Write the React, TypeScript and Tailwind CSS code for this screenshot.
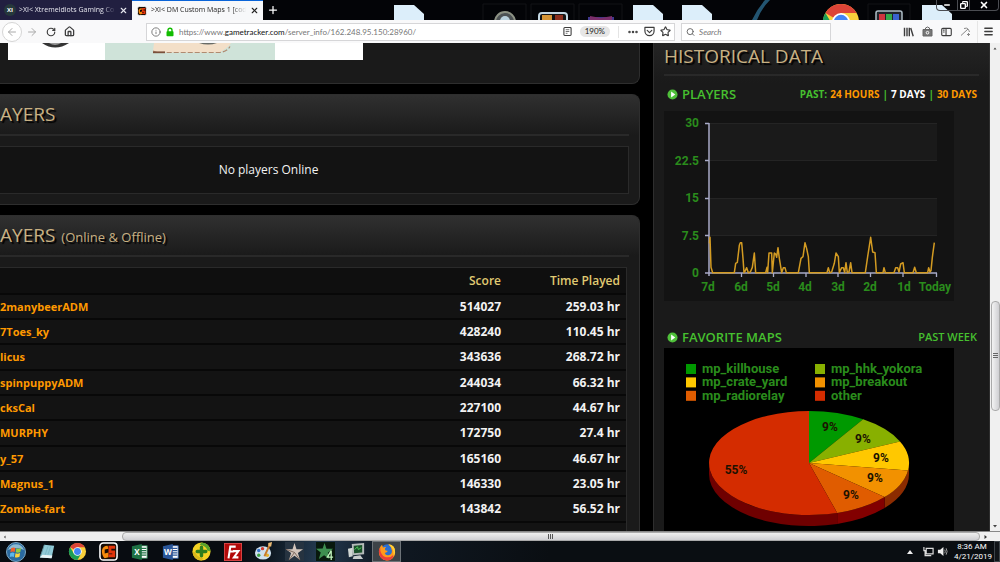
import type { ReactNode } from "react";
import {
  ArrowLeft,
  ArrowRight,
  RotateCw,
  House,
  Info,
  X,
  Plus,
  Search,
  Star,
  Menu,
  Ellipsis,
  Copy,
  Minus,
} from "lucide-react";

const players: [string, string, string][] = [
  ["2manybeerADM", "514027", "259.03 hr"],
  ["7Toes_ky", "428240", "110.45 hr"],
  ["licus", "343636", "268.72 hr"],
  ["spinpuppyADM", "244034", "66.32 hr"],
  ["cksCal", "227100", "44.67 hr"],
  ["MURPHY", "172750", "27.4 hr"],
  ["y_57", "165160", "46.67 hr"],
  ["Magnus_1", "146330", "23.05 hr"],
  ["Zombie-fart", "143842", "56.52 hr"],
];

const slices = [
  { name: "mp_killhouse", share: 1, color: "#009900", label: "9%", lx: 166, ly: 82 },
  { name: "mp_hhk_yokora", share: 1, color: "#88b000", label: "9%", lx: 199, ly: 94 },
  { name: "mp_crate_yard", share: 1, color: "#ffc800", label: "9%", lx: 217, ly: 113 },
  { name: "mp_breakout", share: 1, color: "#f29100", label: "9%", lx: 211, ly: 133 },
  { name: "mp_radiorelay", share: 1, color: "#e05c00", label: "9%", lx: 187, ly: 150 },
  { name: "other", share: 6, color: "#d42c00", label: "55%", lx: 72, ly: 125 },
];

const CX = 145;
const CY = 115;
const RX = 100;
const RY = 52;
const DEPTH = 11;

const at = (deg: number, drop = 0) => {
  const a = (deg * Math.PI) / 180;
  return `${(CX + RX * Math.sin(a)).toFixed(1)} ${(CY - RY * Math.cos(a) + drop).toFixed(1)}`;
};
const wedge = (from: number, to: number) =>
  `M${CX} ${CY}L${at(from)}A${RX} ${RY} 0 ${to - from > 180 ? 1 : 0} 1 ${at(to)}Z`;
const side = (from: number, to: number) =>
  `M${at(from)}A${RX} ${RY} 0 0 1 ${at(to)}L${at(to, DEPTH)}A${RX} ${RY} 0 0 0 ${at(from, DEPTH)}Z`;

function PieChart() {
  let start = 0;
  return (
    <svg viewBox="0 0 290 190" className="block h-[190px] w-[290px] shrink-0 bg-black" role="img" aria-label="Favorite maps">
      <g fontFamily="Roboto, sans-serif" fontWeight="700" fontSize="13">
        {slices.map((s, i) => {
          const x = i % 2 ? 151 : 22;
          const y = 16 + Math.floor(i / 2) * 13.4;
          return (
            <g key={s.name}>
              <rect x={x} y={y} width="10" height="10" fill={s.color} />
              <text x={x + 16} y={y + 9} fill="#2a8c1c">{s.name}</text>
            </g>
          );
        })}
      </g>
      <path d={side(90, 130.9)} fill="#8c2c00" />
      <path d={side(130.9, 163.6)} fill="#820000" />
      <path d={side(163.6, 270)} fill="#6f0000" />
      {slices.map((s) => {
        const from = start;
        start += (s.share * 360) / 11;
        return <path key={s.name} d={wedge(from, start)} fill={s.color} />;
      })}
      <g fontFamily="Roboto, sans-serif" fontWeight="700" fontSize="12" fill="#1c1200" textAnchor="middle">
        {slices.map((s) => (
          <text key={s.name} x={s.lx} y={s.ly + 1}>{s.label}</text>
        ))}
      </g>
    </svg>
  );
}

const yLabels: [string, number][] = [["30", 12], ["22.5", 50], ["15", 87], ["7.5", 125], ["0", 162]];
const xLabels: [string, number][] = [
  ["7d", 44], ["6d", 77], ["5d", 109], ["4d", 141], ["3d", 174], ["2d", 206], ["1d", 240], ["Today", 271],
];

function PlayersChart() {
  return (
    <svg viewBox="0 0 290 190" className="block h-[190px] w-[290px] shrink-0 bg-[#131313]" role="img" aria-label="Players">
      <rect x="46" y="12" width="227" height="37" fill="#1a1a1a" />
      <rect x="46" y="87" width="227" height="37" fill="#1a1a1a" />
      <path d="M46 12.500H273M46 49.500H273M46 87.500H273M46 124.500H273" stroke="#242424" />
      <path d="M45 12V165M41 12.500H45M41 49.500H45M41 87.500H45M41 124.500H45M41 162H273" stroke="#a9abc8" strokeWidth="1.500" fill="none" />
      <path d="M77.500 162v4M109.500 162v4M142 162v4M174 162v4M206.500 162v4M239 162v4M272.500 162v4" stroke="#a9abc8" strokeWidth="1.300" />
      <polyline
        transform="translate(-9 69) scale(.33333)"
        fill="none"
        stroke="#d39b22"
        strokeWidth="4.500"
        strokeLinejoin="round"
        points="163,190 165,172 168,262 173,278 238,278 242,250 247,247 253,196 256,188 260,188 264,235 267,278 270,274 275,263 280,278 286,276 292,262 298,219 302,278 332,278 336,262 338,278 342,219 350,219 352,278 358,219 362,222 365,232 369,203 373,235 380,278 385,263 390,263 394,278 430,278 438,235 444,230 450,188 455,206 460,230 463,278 516,278 520,263 524,278 530,276 538,250 543,219 550,230 553,278 560,263 565,263 569,278 573,248 577,278 582,276 587,248 591,278 631,278 638,230 647,172 653,216 660,218 664,278 684,278 687,263 691,278 717,278 722,263 728,263 732,276 737,252 744,248 748,278 774,278 779,262 784,278 818,278 821,263 825,276 828,272 832,232 838,188"
      />
      <g fontFamily="Roboto, sans-serif" fontWeight="700" fontSize="12" fill="#2a8c1c">
        {yLabels.map(([t, y]) => (
          <text key={t} x="35" y={y + 4} textAnchor="end">{t}</text>
        ))}
        {xLabels.map(([t, x]) => (
          <text key={t} x={x} y="180" textAnchor="middle">{t}</text>
        ))}
      </g>
    </svg>
  );
}

function PanelHeading({ children }: { children: ReactNode }) {
  return (
    <h2 className="flex h-[41px] shrink-0 items-center gap-1.5 border-b-2 border-[#292929] whitespace-nowrap text-[19px] text-[#c8b183] [text-shadow:2px_2px_1px_#000]">
      {children}
    </h2>
  );
}

function SectionTitle({ title, children }: { title: string; children: ReactNode }) {
  return (
    <div className="flex items-center justify-between whitespace-nowrap pl-[3px] pr-[2px] text-[#46c02f]">
      <h3 className="flex items-center gap-1 text-[13px] leading-4 font-semibold">
        <svg viewBox="0 0 12 12" className="size-[11px]" aria-hidden="true">
          <circle cx="6" cy="6" r="5.500" fill="#4fc03a" />
          <path d="M4.500 2.800 9 6 4.500 9.200Z" fill="#fff" />
        </svg>
        {title}
      </h3>
      {children}
    </div>
  );
}

const panel =
  "rounded-r-lg border border-l-0 border-[#2e2e2e] bg-[#1a1a1a] bg-[linear-gradient(#303030,#1a1a1a_40px)] pr-2.5";

function GameTrackerIcon({ className }: { className: string }) {
  return (
    <svg viewBox="0 0 20 20" className={className} aria-hidden="true">
      <rect x="1" y="1" width="18" height="18" rx="3.500" fill="#160c05" stroke="#fff" strokeWidth="1.600" />
      <path d="M3 9Q4 4 9 4L10 7 6 8v4l4-1v5L6 17Q3 15 3 9Z" fill="#f58a0c" />
      <path d="M10 4h7v3h-4v2h4v7h-7v-3h4v-1h-4Z" fill="#e2340b" />
    </svg>
  );
}

function ChromeIcon({ className }: { className: string }) {
  return (
    <svg viewBox="0 0 20 20" className={className} aria-hidden="true">
      <circle cx="10" cy="10" r="9" fill="#f9cf3b" />
      <path d="M10 10 2.200 5.500A9 9 0 0 1 17.800 5.500H10Z" fill="#dc4437" />
      <path d="M2.200 5.500A9 9 0 0 0 10 19L13.900 12.200 10 10 6.200 12.200Z" fill="#1b9e57" />
      <circle cx="10" cy="10" r="4.500" fill="#fff" />
      <circle cx="10" cy="10" r="3.600" fill="#4285f4" />
    </svg>
  );
}

function DesktopFile() {
  return (
    <svg viewBox="0 0 30 15" className="h-[15px] w-[30px]" aria-hidden="true">
      <path d="M0 0H20L30 9V15H0Z" fill="#dceefa" />
    </svg>
  );
}

function TabStrip() {
  return (
    <header className="relative flex h-5 shrink-0 overflow-hidden bg-[#030407] text-[7px]">
      <div className="flex w-[132px] shrink-0 items-center gap-[3px] bg-[#211f40] pr-1 pl-1 text-[#e6e6ee]">
        <span className="grid size-3 shrink-0 place-items-center rounded-full bg-[#26383b] text-[6px] font-bold text-white">XI</span>
        <span className="min-w-0 flex-1 overflow-hidden whitespace-nowrap [mask-image:linear-gradient(90deg,#000_85%,transparent)]">
          &gt;XI&lt; XtremeIdiots Gaming Co
        </span>
        <button aria-label="Close tab"><X className="size-[9px]" strokeWidth={3} /></button>
      </div>
      <div className="flex w-[131px] shrink-0 items-center gap-1 border-t border-[#0a64d8] bg-[#f7f8fa] pr-1 pl-[5px] text-[#222]">
        <GameTrackerIcon className="size-2.5 shrink-0" />
        <span className="min-w-0 flex-1 overflow-hidden whitespace-nowrap [mask-image:linear-gradient(90deg,#000_85%,transparent)]">
          &gt;XI&lt; DM Custom Maps 1 [cod
        </span>
        <button aria-label="Close tab"><X className="size-[9px]" strokeWidth={3} /></button>
      </div>
      <button aria-label="New tab" className="ml-1 text-white"><Plus className="size-3" strokeWidth={2.5} /></button>
      <div className="absolute top-[5px] left-[394px]"><DesktopFile /></div>
      <svg viewBox="0 0 150 20" className="absolute top-0 left-[480px] h-5 w-[150px]" aria-hidden="true">
        <path d="M3 20V4H46V20M51 20V4H94V20M99 20V4H142V20" fill="none" stroke="#121316" />
        <circle cx="25" cy="22" r="10" fill="#4c5254" stroke="#8d9284" strokeWidth="2" />
        <circle cx="25" cy="21" r="5" fill="#b8d0dc" />
        <rect x="59" y="13" width="28" height="12" rx="3" fill="#141414" stroke="#c3d7e2" strokeWidth="2" />
        <path d="M62 15h10v5H62Z" fill="#d69535" /><path d="M75 15h8v5h-8Z" fill="#8c2f1d" />
        <path d="M108 17h26v3h-26Z" fill="#41378d" /><path d="m110 16 11 2 11-2v4h-22Z" fill="#7a2e6a" />
      </svg>
      <div className="absolute top-[5px] left-[633px]"><DesktopFile /></div>
      <div className="absolute top-[5px] left-[682px]"><DesktopFile /></div>
      <svg viewBox="0 0 40 20" className="absolute top-0 left-[740px] h-5 w-10" aria-hidden="true">
        <path d="M25 0Q17 9 12 20H17Q21 9 30 0Z" fill="#2f7095" opacity=".75" />
      </svg>
      <div className="absolute top-0.5 left-[821px]"><ChromeIcon className="size-10" /></div>
      <svg viewBox="0 0 48 20" className="absolute top-0 left-[866px] h-5 w-12" aria-hidden="true">
        <path d="M2 20V4H44V20" fill="none" stroke="#121316" />
        <rect x="10" y="11" width="26" height="12" rx="2" fill="#20242a" stroke="#aebdc6" strokeWidth="1.500" />
        <path d="M13 14h6v6h-6Z" fill="#d0343e" /><path d="M20 14h6v6h-6Z" fill="#35a84a" /><path d="M27 14h6v6h-6Z" fill="#3a63cf" />
      </svg>
      <div className="absolute top-[5px] left-[922px]"><DesktopFile /></div>
      <div className="absolute top-0 right-px flex h-[11px] rounded-b-sm border border-t-0 border-[#4b4d52] text-white">
        <button aria-label="Minimize" className="grid w-5 place-items-center"><Minus className="size-2" strokeWidth={4} /></button>
        <button aria-label="Restore" className="grid w-[13px] place-items-center border-x border-[#4b4d52]"><Copy className="size-2 -scale-x-100" strokeWidth={4} /></button>
        <button aria-label="Close" className="grid w-7 place-items-center"><X className="size-2.5" strokeWidth={4} /></button>
      </div>
    </header>
  );
}

function Toolbar() {
  return (
    <nav className="flex h-[23px] shrink-0 items-center bg-[#f9f9fa] pr-1.5 pl-[2px] font-[Lato,sans-serif] text-[#3d3d3d]">
      <button aria-label="Back" className="grid size-5 place-items-center rounded-full border border-[#d5d5d5] bg-white text-[#aaa]"><ArrowLeft className="size-3" /></button>
      <button aria-label="Forward" className="grid w-[19px] place-items-center text-[#aaa]"><ArrowRight className="size-3" /></button>
      <button aria-label="Reload" className="grid w-[19px] place-items-center"><RotateCw className="size-2.5" strokeWidth={2.8} /></button>
      <button aria-label="Home" className="grid w-[18px] place-items-center"><House className="size-[11px]" strokeWidth={2.8} /></button>
      <div className="ml-[68px] flex h-[18px] min-w-0 flex-1 items-center gap-1 border border-[#d6d6d8] bg-white pr-[3px] pl-1">
        <Info className="size-[10px] shrink-0 text-[#666]" />
        <svg viewBox="0 0 10 10" className="size-[10px] shrink-0" aria-hidden="true">
          <path d="M3 5V3.200a2 2 0 0 1 4 0V5" fill="none" stroke="#12bc00" strokeWidth="1.400" />
          <rect x="1.500" y="4.300" width="7" height="5" rx=".8" fill="#12bc00" />
        </svg>
        <div className="min-w-0 flex-1 text-[8px] whitespace-nowrap text-[#777]">
          https://www.<span className="text-[#111]">gametracker.com</span>/server_info/162.248.95.150:28960/
        </div>
        <button aria-label="Reader view">
          <svg viewBox="0 0 10 10" className="size-[9px]" fill="none" stroke="currentColor" strokeWidth="1.200"><rect x="1" y=".6" width="8" height="8.800" rx="1" /><path d="M3 3h4M3 5h4M3 7h2" strokeWidth=".8" /></svg>
        </button>
        <button className="ml-1 h-[11px] rounded-full bg-[#e6e6e6] px-[5px] text-[8px] leading-[11px] text-[#222]">190%</button>
        <span className="mx-1 h-3 w-px bg-[#e4e4e4]" />
        <button aria-label="Page actions"><Ellipsis className="size-3" strokeWidth={3} /></button>
        <button aria-label="Save to Pocket" className="ml-px">
          <svg viewBox="0 0 12 12" className="size-[11px]" fill="none" stroke="currentColor" strokeWidth="1.300" strokeLinecap="round" strokeLinejoin="round"><path d="M1 1.500H11V5.500A5 5 0 0 1 1 5.500Z" /><path d="m3.500 4.800 2.500 2.400 2.500-2.400" /></svg>
        </button>
        <button aria-label="Bookmark" className="ml-px"><Star className="size-[11px]" strokeWidth={2.5} /></button>
      </div>
      <label className="ml-1.5 flex h-[18px] w-[150px] items-center gap-1 border border-[#d6d6d8] bg-white pl-1">
        <Search className="size-2.5 text-[#666]" strokeWidth={2.5} />
        <input aria-label="Search" placeholder="Search" className="w-full bg-transparent text-[8px] italic outline-none placeholder:text-[#777]" />
      </label>
      <div className="ml-[72px] flex items-center gap-2">
        <button aria-label="Library">
          <svg viewBox="0 0 11 10" className="h-2.5 w-[11px]" stroke="currentColor" strokeWidth="1.400"><path d="M1.500.8v8.500M4 .8v8.500M6.300.8v8.500M7.700 1l2.500 8.300" /></svg>
        </button>
        <button aria-label="Shopping">
          <svg viewBox="0 0 11 11" className="size-[11px]" fill="none" stroke="#666"><path d="M1 3.500h9V10H1Z" fill="#777" /><path d="M3.500 3.500V2q2-2 4 0v1.500" /><circle cx="5.500" cy="6.700" r="1.300" stroke="#fff" /></svg>
        </button>
        <button aria-label="Sidebar">
          <svg viewBox="0 0 12 10" className="h-2.5 w-[11px]" fill="none" stroke="currentColor" strokeWidth="1.200"><rect x=".8" y="1" width="10.400" height="8" rx="1.200" /><path d="M5.500 1v8M2.300 3h1.600M2.300 5h1.600" /></svg>
        </button>
        <button aria-label="Customize">
          <svg viewBox="0 0 11 11" className="size-[11px]" fill="none" stroke="#888"><path d="M1 9.500 8 3M4 2.500Q7 1.500 8 3T9.500 6M8.500 7v3M7 8.500h3" /></svg>
        </button>
      </div>
      <span className="mr-[5px] ml-1.5 h-[22px] w-px bg-[#e6e6e6]" />
      <button aria-label="Open menu"><Menu className="size-[11px]" strokeWidth={3} /></button>
    </nav>
  );
}

function Banner() {
  return (
    <div className="ml-2 h-[17px] w-[355px] bg-white">
      <svg viewBox="0 0 355 17" className="block h-[17px] w-[355px]" aria-hidden="true">
        <rect x="97" width="170" height="17" fill="#cfe3d9" />
        <path d="M34 0Q47 9 61 0Z" fill="#343434" /><path d="M41 0q6 4 12 0Z" fill="#999" />
        <path d="M145 8 146 0H223Q219 6 211 9.500H148Z" fill="#f3dfc8" />
        <path d="M145 8l4 1.500h63q7-1 10-6" fill="none" stroke="#b08a70" strokeWidth="1.200" strokeDasharray="5 2" />
        <path d="M145 9.300h12" stroke="#7a4f3a" strokeWidth="1.800" />
        <path d="M191 0q9 3 18 0Z" fill="#686b66" />
      </svg>
    </div>
  );
}

function LeftColumn() {
  return (
    <main className="flex min-w-0 flex-1 flex-col gap-2.5 overflow-hidden">
      <section className="h-[41px] shrink-0 rounded-br-lg border-r border-b border-[#2e2e2e] bg-[#1a1a1a]">
        <Banner />
      </section>
      <section className={`${panel} shrink-0 pb-2.5`}>
        <PanelHeading>AYERS</PanelHeading>
        <div className="mt-2.5 border border-l-0 border-[#2a2a2a] bg-[#131313] p-3.5 pr-[105px] text-center text-xs leading-[18px] text-[#f2f2f2]">
          No players Online
        </div>
      </section>
      <section className={`${panel} flex-1`}>
        <PanelHeading>
          AYERS <span className="pt-1 text-[13px]">(Online &amp; Offline)</span>
        </PanelHeading>
        <div className="mt-2.5 mr-0.5 border border-l-0 border-[#2a2a2a] bg-[#131313]">
          <table className="w-full table-fixed border-collapse text-right text-xs leading-4 font-bold text-[#f2f2f2]">
            <thead>
              <tr className="h-[26px] bg-[#0f0f0f] text-[#e0ca72]">
                <th scope="col" aria-label="Name" />
                <th scope="col" className="w-[120px] font-semibold">Score</th>
                <th scope="col" className="w-[125px] pr-1.5 font-semibold">Time Played</th>
              </tr>
            </thead>
            <tbody>
              {players.map(([name, score, time]) => (
                <tr key={name} className="h-[25px] border-t-2 border-[#080808] nth-[3n]:h-[26px]">
                  <td className="text-left text-[11px]"><a href="#player" className="text-[#ff9900]">{name}</a></td>
                  <td>{score}</td>
                  <td className="pr-1.5">{time}</td>
                </tr>
              ))}
              <tr className="h-[25px] border-t-2 border-[#080808]"><td colSpan={3} /></tr>
            </tbody>
          </table>
        </div>
      </section>
    </main>
  );
}

function RightColumn() {
  return (
    <aside className="flex w-[337px] shrink-0 flex-col overflow-hidden border-x border-[#2e2e2e] bg-[#1a1a1a] bg-[linear-gradient(#242424,#1a1a1a_40px)] pr-2.5 pl-2.5">
      <h2 className="h-[33px] shrink-0 border-b-2 border-[#292929] text-[19px] leading-[26px] text-[#c8b183] [text-shadow:2px_2px_1px_#000]">
        HISTORICAL DATA
      </h2>
      <div className="mt-2.5 mb-[9px]">
        <SectionTitle title="PLAYERS">
          <div className="flex gap-[3px] text-[10px] leading-4 font-bold">
            <span>PAST:</span>
            <a href="#24h" className="text-[#ff9900]">24 HOURS</a>
            <span>|</span>
            <a href="#7d" className="text-white">7 DAYS</a>
            <span>|</span>
            <a href="#30d" className="text-[#ff9900]">30 DAYS</a>
          </div>
        </SectionTitle>
      </div>
      <PlayersChart />
      <div className="mt-7 mb-[3px]">
        <SectionTitle title="FAVORITE MAPS">
          <span className="text-[11px] leading-4 font-semibold">PAST WEEK</span>
        </SectionTitle>
      </div>
      <PieChart />
    </aside>
  );
}

function VerticalScrollbar() {
  return (
    <div className="flex w-2.5 shrink-0 flex-col items-center bg-[#f0f0f0]">
      <svg viewBox="0 0 10 10" className="size-2.5" aria-hidden="true"><path d="m3.500 6.500 1.500-2 1.500 2Z" fill="#444" /></svg>
      <div className="flex-[248]" />
      <div className="grid h-[110px] w-[9px] place-items-center rounded-sm border border-[#aaa] bg-[linear-gradient(90deg,#f3f3f3,#cfcfd2)]">
        <svg viewBox="0 0 5 6" className="h-1.5 w-[5px]" stroke="#666" aria-hidden="true"><path d="M0 .5h5M0 2.500h5M0 4.500h5" /></svg>
      </div>
      <div className="flex-[110]" />
      <svg viewBox="0 0 10 10" className="size-2.5" aria-hidden="true"><path d="m3 4 2 2.500L7 4Z" fill="#444" /></svg>
    </div>
  );
}

function HorizontalScrollbar() {
  return (
    <div className="flex h-2.5 shrink-0 items-center border-t border-[#888] bg-[#f0f0f0]">
      <svg viewBox="0 0 10 10" className="size-2.5" aria-hidden="true"><path d="M5.500 3.500 4 5l1.500 1.500Z" fill="#333" /></svg>
      <div className="w-[112px]" />
      <div className="grid h-[9px] flex-1 place-items-center rounded-sm border border-[#aaa] bg-[linear-gradient(#efefef,#cfcfd2)]">
        <svg viewBox="0 0 6 5" className="h-[5px] w-1.5" stroke="#555" aria-hidden="true"><path d="M.5 0v5M2.500 0v5M4.500 0v5" /></svg>
      </div>
      <svg viewBox="0 0 10 10" className="size-2.5" aria-hidden="true"><path d="M4.500 3 7 5 4.500 7Z" fill="#333" /></svg>
      <div className="w-2.5" />
    </div>
  );
}

function OfficeIcon({ letter, color }: { letter: string; color: string }) {
  return (
    <svg viewBox="0 0 20 20" className="size-[18px]" aria-hidden="true">
      <path d="M10 3h8v14h-8Z" fill="#fff" stroke={color} />
      <path d="M11 6h6M11 8.500h6M11 11h6M11 13.500h6" stroke={color} strokeWidth="1.200" />
      <path d="M1 3.500 12 1v18L1 16.500Z" fill={color} />
      <text x="6.500" y="13.500" fontSize="9" fontWeight="700" textAnchor="middle" fill="#fff" fontFamily="Open Sans, sans-serif">{letter}</text>
    </svg>
  );
}

const taskIcons: [string, ReactNode][] = [
  ["Start", (
    <svg viewBox="0 0 20 20" className="size-5">
      <circle cx="10" cy="10" r="9.500" fill="#2a6aa0" stroke="#7da7c2" /><path d="M2 8a8.500 8.500 0 0 1 16 0Q10 4 2 8Z" fill="#8dbbd2" />
      <path d="M5 6.500q2-1.500 4.300-.5l-.6 4Q6.500 9 4.400 10.300Z" fill="#f0602b" /><path d="M10.300 6.300q2.300 1 4.700-.4l-.7 4q-2.200 1.300-4.500.4Z" fill="#92cc40" />
      <path d="M4.200 11.300q2.200-1.300 4.300-.4l-.6 4Q6 14 3.800 15Z" fill="#5cb7ec" /><path d="M9.500 11.200q2.400 1 4.600-.3l-.6 3.900q-2.300 1.400-4.600.4Z" fill="#fcd23c" />
    </svg>
  )],
  ["Notepad", (
    <svg viewBox="0 0 20 20" className="size-[18px]"><path d="m7 2 11 1-3 14-13-1Z" fill="#8fc9d6" /><path d="m2 16 13 1 1-3-11-1Z" fill="#e9f4f6" /><path d="m7 2-4 12" stroke="#5f8d98" /><path d="m11 4-3 9M14 4l-3 9" stroke="#79b7c4" /></svg>
  )],
  ["Chrome", <ChromeIcon className="size-[19px]" />],
  ["GameTracker", <GameTrackerIcon className="size-[19px]" />],
  ["Excel", <OfficeIcon letter="X" color="#1f7244" />],
  ["Word", <OfficeIcon letter="W" color="#2a5699" />],
  ["Norton", (
    <svg viewBox="0 0 20 20" className="size-[19px]"><circle cx="10" cy="10" r="9.500" fill="#f5d324" /><path d="M10 .5A9.500 9.500 0 0 1 19.500 10L16 9Q15 4 8 3Z" fill="#59a32c" /><path d="M10 19.500A9.500 9.500 0 0 1 .5 10L4 11Q5 16 12 17Z" fill="#d9b81c" /><path d="M10 5.500v9M5.500 10h9" stroke="#2f7d1c" strokeWidth="3.600" strokeLinecap="round" /></svg>
  )],
  ["FileZilla", (
    <svg viewBox="0 0 20 20" className="size-[18px]"><rect x=".5" y=".5" width="19" height="19" fill="#b30a0a" stroke="#dd4a4a" /><path d="M5 17 7 4h6M6 9.500h5M10 9h6l-5 7h5" fill="none" stroke="#fff" strokeWidth="2.300" /></svg>
  )],
  ["Paint", (
    <svg viewBox="0 0 20 20" className="size-[19px]"><ellipse cx="9.500" cy="11.500" rx="8.500" ry="7" fill="#cfe1ee" /><circle cx="5" cy="9" r="1.800" fill="#3674c8" /><circle cx="9" cy="7" r="1.800" fill="#d1392c" /><circle cx="5" cy="14" r="1.800" fill="#3da344" /><circle cx="14" cy="14" r="1.800" fill="#e6b12b" /><path d="m17 2-6 13" stroke="#c77a2c" strokeWidth="2" /><path d="m15 1 4-1-1 5-3-1Z" fill="#e6b873" /></svg>
  )],
  ["Call of Duty", (
    <svg viewBox="0 0 20 20" className="size-[19px]"><rect width="20" height="20" fill="#263340" /><path d="m10 1 2.100 6.500L19 7.700l-5.400 4L15.800 19 10 14.600 4.200 19l2.200-7.300L1 7.700l6.900-.2Z" fill="#d2c5bb" /><path d="M10 11l5.800 8M10 11 1 7.700M10 11 4.200 19" stroke="#7a675c" /></svg>
  )],
  ["Call of Duty 4", (
    <svg viewBox="0 0 20 20" className="size-[19px]"><rect width="20" height="20" fill="#08190d" /><path d="m9 1 2 6 7 .2-5.500 4L14 18l-5.500-4L3 18l2-7-5-4 7-.2Z" fill="#3e8f50" /><path d="M16 9v10M16 9l-4 7h6" fill="none" stroke="#bff3bb" strokeWidth="1.400" /></svg>
  )],
  ["Remote", (
    <svg viewBox="0 0 20 20" className="size-[19px]"><path d="M5 2 18 1v12L6 14Z" fill="#b4bab9" /><path d="m7 4 9-.8v7.900l-8.500.7Z" fill="#194f29" /><path d="m1 7 5-1v9l-4 1Z" fill="#d0d6d3" /><path d="m7 15 7-1 3 4H6Z" fill="#c8cccc" /><path d="m8 8 3-3 1 3 3-2" stroke="#4dcb58" fill="none" /></svg>
  )],
];

function Taskbar() {
  return (
    <footer className="flex h-[21px] shrink-0 items-center bg-[#090e13] bg-[linear-gradient(100deg,#080c11_24%,#0d1720_27%,#243a50_32%,#101923_38%,#0a0e12_55%)]">
      {taskIcons.map(([name, icon]) => (
        <button key={name} aria-label={name} className="grid w-[31px] place-items-center">{icon}</button>
      ))}
      <button aria-label="Firefox" className="grid h-[21px] w-[29px] place-items-center border border-[#6d7378] bg-[#3d4348]">
        <svg viewBox="0 0 20 20" className="size-[18px]">
          <circle cx="10.500" cy="9" r="7.500" fill="#2b6fd0" />
          <path d="M1 10Q1 5 4.500 2l1 3q2-1 3.500-.5Q7 6 8 8l3 1q-1 2-3.500 2 1 3 4 2.500 4-.5 4-5-.2-4-4-7 8 1 7.500 9.500A9 9 0 0 1 1 10Z" fill="#ff9a1b" />
          <path d="M1 10q0-3 1.500-5Q2 13 8 15.500q6 1.500 10-3-2 7-8 7Q2 19 1 10Z" fill="#ec3f3a" />
          <path d="M11.500 1.500q8 1 7.500 9-.5 3-2 4.500 1-7-2-10Z" fill="#ffd035" />
        </svg>
      </button>
      <div className="flex-1" />
      <button aria-label="Show hidden icons"><svg viewBox="0 0 6 6" className="size-1.5"><path d="m0 5 3-4 3 4Z" fill="#eee" /></svg></button>
      <svg viewBox="0 0 12 12" className="ml-2.5 size-[11px]" fill="none" stroke="#ddd" strokeWidth="1.300" aria-hidden="true"><path d="M3.500 2.500H11v6H3.500ZM1 1v4h2.500M2.300 5v5.500H9" /></svg>
      <svg viewBox="0 0 12 12" className="ml-[3px] size-[11px]" aria-hidden="true"><path d="M1 4h2.500L7 1v10L3.500 8H1Z" fill="#eee" /><path d="M8.500 4q1 2 0 4M10 2.500q2 3.500 0 7" fill="none" stroke="#aaa" /></svg>
      <div className="ml-1.5 w-9 text-center font-[Roboto,sans-serif] text-[8px] leading-[10px] whitespace-nowrap text-white">
        <div>8:36 AM</div>
        <div>4/21/2019</div>
      </div>
      <div className="ml-1 h-[21px] w-1.5 border border-[#3c4348] bg-[#111519]" />
    </footer>
  );
}

export default function App() {
  return (
    <div className="flex h-screen flex-col overflow-hidden bg-black font-['Open_Sans',sans-serif]">
      <TabStrip />
      <Toolbar />
      <div className="flex min-h-0 flex-1">
        <div className="flex min-w-0 flex-1 gap-[13px] bg-black">
          <LeftColumn />
          <RightColumn />
        </div>
        <VerticalScrollbar />
      </div>
      <HorizontalScrollbar />
      <Taskbar />
    </div>
  );
}
